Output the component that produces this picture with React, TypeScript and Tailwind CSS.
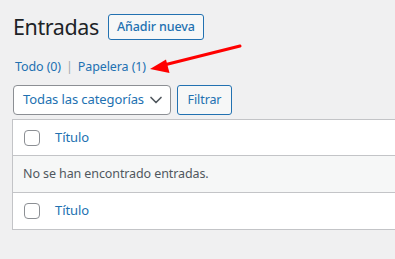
import { ChevronDown } from 'lucide-react'

function Checkbox() {
  return <span className="block w-4 h-4 rounded-[4px] border border-[#8c8f94] bg-white shrink-0" />
}

export default function App() {
  return (
    <div
      className="relative w-[395px] h-[259px] overflow-hidden bg-[#f0f0f1] pl-[12px] pt-[14px] text-[12.5px] tracking-[-0.1px]"
      style={{ fontFamily: '"Noto Sans", "Open Sans", sans-serif' }}
    >
      <div className="flex items-center h-[26px] gap-[9px] pl-px">
        <h1 className="text-[21.5px] leading-none font-normal tracking-[-0.4px] text-[#1d2327]">Entradas</h1>
        <button className="w-[96px] h-[26px] rounded-[3px] border border-[#2271b1] bg-[#f6f7f7] font-medium text-[#2271b1]">
          Añadir nueva
        </button>
      </div>

      <div className="flex items-center h-[16px] mt-[19px] pl-[3px] text-[#2271b1]">
        <span>Todo (0)</span>
        <span className="mx-[5px] text-[#a7aaad]">|</span>
        <span>Papelera (1)</span>
      </div>

      <div className="flex items-center gap-[6px] mt-[10px] pl-px">
        <div className="flex items-center justify-between w-[158px] h-[30px] rounded-[4px] border border-[#8c8f94] bg-white pl-[9px] pr-[4px] text-[13px] whitespace-nowrap text-[#2271b1]">
          <span>Todas las categorías</span>
          <ChevronDown className="w-5 h-5 text-[#50575e]" strokeWidth={2} />
        </div>
        <button className="w-[55px] h-[30px] rounded-[3px] border border-[#2271b1] bg-[#f6f7f7] text-[#2271b1]">
          Filtrar
        </button>
      </div>

      <div className="mt-[4px] w-[420px] border border-[#c3c4c7] bg-white">
        <div className="flex items-center h-[36px] pl-[11px] gap-[15px] border-b border-[#c3c4c7]">
          <Checkbox />
          <span className="text-[13px] text-[#2271b1]">Título</span>
        </div>
        <div className="flex items-center h-[37px] pl-[10px] bg-[#f6f7f7] border-b border-[#c3c4c7] text-[#50575e]">
          No se han encontrado entradas.
        </div>
        <div className="flex items-center h-[36px] pl-[11px] gap-[15px]">
          <Checkbox />
          <span className="text-[13px] text-[#2271b1]">Título</span>
        </div>
      </div>

      <svg className="absolute left-0 top-0 pointer-events-none" width="395" height="259" viewBox="0 0 395 259">
        <line x1="240" y1="46" x2="164" y2="65" stroke="#ff0000" strokeWidth="3" strokeLinecap="round" />
        <polygon points="150,69 166,59.5 169.5,73" fill="#ff0000" />
      </svg>
    </div>
  )
}
